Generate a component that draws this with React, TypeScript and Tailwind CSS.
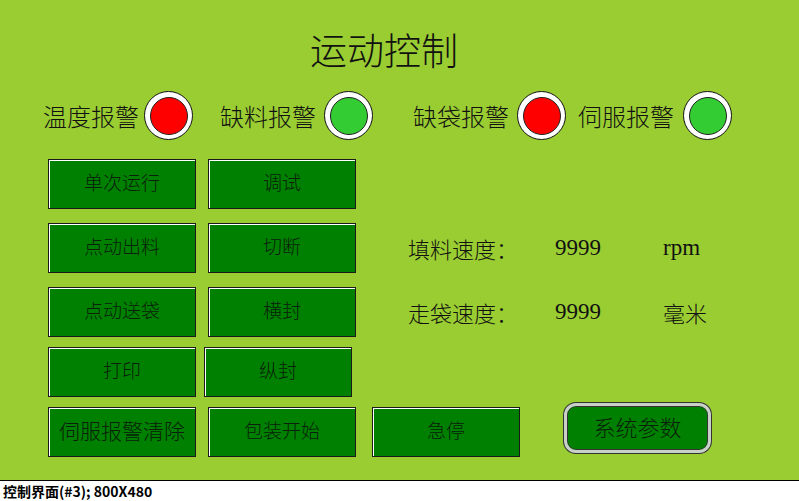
import React from "react"

const CJK = "font-['Noto_Sans_CJK_SC',sans-serif]"

function Lamp({ on }: { on: "red" | "green" }) {
  return (
    <div className="flex h-[49px] w-[49px] shrink-0 items-center justify-center rounded-full border border-[#111] bg-white">
      <div
        className={`h-[38px] w-[38px] rounded-full border border-[#222] ${
          on === "red" ? "bg-[#ff0000]" : "bg-[#33cc33]"
        }`}
      />
    </div>
  )
}

function Btn({ label, className = "" }: { label: string; className?: string }) {
  return (
    <button
      className={`flex h-[50px] w-[148px] shrink-0 items-center justify-center border border-[#1a1a1a] bg-[#008000] pb-[3px] text-[19px] font-light text-[#0a200a] shadow-[inset_1px_1px_0_#ffffff] ${CJK} ${className}`}
    >
      {label}
    </button>
  )
}

const LAMPS: Array<{ label: string; on: "red" | "green"; ml: string; gap: string }> = [
  { label: "温度报警", on: "red", ml: "ml-[43px]", gap: "ml-[5px]" },
  { label: "缺料报警", on: "green", ml: "ml-[27px]", gap: "ml-[8px]" },
  { label: "缺袋报警", on: "red", ml: "ml-[40px]", gap: "ml-[8px]" },
  { label: "伺服报警", on: "green", ml: "ml-[12px]", gap: "ml-[9px]" },
]

function Speed({ label, value, unit, unitCjk }: { label: string; value: string; unit: string; unitCjk?: boolean }) {
  return (
    <div className="ml-[52px] flex items-center text-[22px] text-[#111]">
      <span className={`w-[147px] font-light ${CJK}`}>{label}</span>
      <span className="w-[108px] text-[23px] font-['Liberation_Serif',serif]">{value}</span>
      <span className={unitCjk ? `font-light ${CJK}` : "text-[23px] font-['Liberation_Serif',serif]"}>{unit}</span>
    </div>
  )
}

export default function App() {
  return (
    <div className="flex h-[501px] w-[799px] flex-col overflow-hidden bg-white">
      <div className="flex h-[480px] flex-col bg-[#9acd32]">
        <h1 className={`ml-[310px] pt-[31px] text-[37px] leading-none font-light text-[#111] ${CJK}`}>
          运动控制
        </h1>

        <div className="mt-[23px] flex items-center">
          {LAMPS.map(({ label, on, ml, gap }) => (
            <div key={label} className={`flex items-center ${ml}`}>
              <span className={`w-[96px] text-[24px] leading-none font-light text-[#111] ${CJK}`}>{label}</span>
              <div className={gap}>
                <Lamp on={on} />
              </div>
            </div>
          ))}
        </div>

        <div className="mt-[19px] flex pl-[48px]">
          <Btn label="单次运行" />
          <Btn label="调试" className="ml-[12px]" />
        </div>

        <div className="mt-[14px] flex items-center pl-[48px]">
          <Btn label="点动出料" />
          <Btn label="切断" className="ml-[12px]" />
          <Speed label="填料速度：" value="9999" unit="rpm" />
        </div>

        <div className="mt-[14px] flex items-center pl-[48px]">
          <Btn label="点动送袋" />
          <Btn label="横封" className="ml-[12px]" />
          <Speed label="走袋速度：" value="9999" unit="毫米" unitCjk />
        </div>

        <div className="mt-[10px] flex pl-[48px]">
          <Btn label="打印" />
          <Btn label="纵封" className="ml-[8px]" />
        </div>

        <div className="mt-[10px] flex items-start pl-[48px]">
          <Btn label="伺服报警清除" className="text-[21px]" />
          <Btn label="包装开始" className="ml-[12px]" />
          <Btn label="急停" className="ml-[16px]" />
          <button
            className={`-mt-[4px] ml-[44px] flex h-[50px] w-[147px] items-center justify-center rounded-[12px] border-[3px] border-[#c8d0c8] bg-[#008000] pb-[3px] text-[22px] font-light text-[#0a200a] shadow-[0_0_0_1px_#333,inset_0_0_0_1px_#333] ${CJK}`}
          >
            系统参数
          </button>
        </div>
      </div>
      <div className="h-px bg-black" />
      <div className={`pl-[3px] text-[14px] leading-[20px] font-bold text-black ${CJK}`}>
        控制界面(#3); 800X480
      </div>
    </div>
  )
}
